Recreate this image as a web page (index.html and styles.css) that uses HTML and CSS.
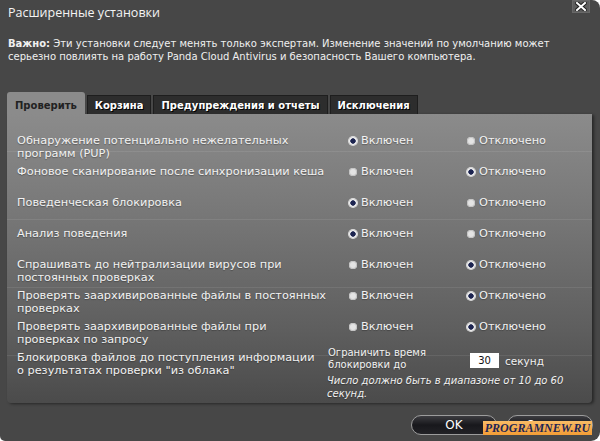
FILE: index.html
```html
<!DOCTYPE html>
<html lang="ru">
  <head>
    <meta charset="UTF-8" />
    <meta name="viewport" content="width=device-width, initial-scale=1.0" />
    <title>Расширенные установки</title>
    <link rel="stylesheet" href="styles.css">
  </head>
  <body>
    <div class="dialog">
      <div class="titlebar">
        <div class="title">Расширенные установки</div>
        <div class="close">
          <svg width="12" height="9" viewBox="0 0 12 9">
            <path d="M2 1 L10 8 M10 1 L2 8" stroke="#222" stroke-width="4" stroke-linecap="square" />
            <path d="M2 1 L10 8 M10 1 L2 8" stroke="#fff" stroke-width="2" stroke-linecap="square" />
          </svg>
        </div>
      </div>
      <p class="intro">
        <b>Важно:</b> Эти установки следует менять только экспертам. Изменение значений по умолчанию может<br>
        серьезно повлиять на работу Panda Cloud Antivirus и безопасность Вашего компьютера.
      </p>
      <div class="tabs">
        <div class="tab active">Проверить</div>
        <div class="tab">Корзина</div>
        <div class="tab">Предупреждения и отчеты</div>
        <div class="tab">Исключения</div>
      </div>
      <div class="panel">
        <div class="row">
          <div class="label">Обнаружение потенциально нежелательных<br>программ (PUP)</div>
          <div class="opt"><span class="radio on"></span>Включен</div>
          <div class="opt"><span class="radio"></span>Отключено</div>
        </div>
        <div class="row">
          <div class="label">Фоновое сканирование после синхронизации кеша</div>
          <div class="opt"><span class="radio"></span>Включен</div>
          <div class="opt"><span class="radio on"></span>Отключено</div>
        </div>
        <div class="row">
          <div class="label">Поведенческая блокировка</div>
          <div class="opt"><span class="radio on"></span>Включен</div>
          <div class="opt"><span class="radio"></span>Отключено</div>
        </div>
        <div class="row">
          <div class="label">Анализ поведения</div>
          <div class="opt"><span class="radio on"></span>Включен</div>
          <div class="opt"><span class="radio"></span>Отключено</div>
        </div>
        <div class="row">
          <div class="label">Спрашивать до нейтрализации вирусов при<br>постоянных проверках</div>
          <div class="opt"><span class="radio"></span>Включен</div>
          <div class="opt"><span class="radio on"></span>Отключено</div>
        </div>
        <div class="row">
          <div class="label">Проверять заархивированные файлы в постоянных<br>проверках</div>
          <div class="opt"><span class="radio"></span>Включен</div>
          <div class="opt"><span class="radio on"></span>Отключено</div>
        </div>
        <div class="row">
          <div class="label">Проверять заархивированные файлы при<br>проверках по запросу</div>
          <div class="opt"><span class="radio"></span>Включен</div>
          <div class="opt"><span class="radio on"></span>Отключено</div>
        </div>
        <div class="row last">
          <div class="label">Блокировка файлов до поступления информации<br>о результатах проверки "из облака"</div>
          <div class="limit">
            <div class="limit-line">
              <div class="limit-text">Ограничить время<br>блокировки до</div>
              <div class="num">30</div>
              <div class="unit">секунд</div>
            </div>
            <div class="note">Число должно быть в диапазоне от 10 до 60<br>секунд.</div>
          </div>
        </div>
      </div>
      <div class="footer">
        <div class="btn">OK</div>
        <div class="btn">Отмена</div>
      </div>
      <div class="watermark">PROGRAMNEW.RU</div>
    </div>
  </body>
</html>
```

FILE: styles.css
```css
body {
  margin: 0;
  background-color: #fff;
  font-family: "DejaVu Sans", sans-serif;
}
.dialog {
  position: relative;
  width: 600px;
  height: 441px;
  overflow: hidden;
  background-color: #474747;
  border-radius: 0 8px 9px 5px;
  color: #f2f2f2;
}
.titlebar {
  display: flex;
  justify-content: space-between;
  align-items: flex-start;
  height: 23px;
}
.title {
  padding: 4px 0 0 8px;
  font-family: "Open Sans", sans-serif;
  font-size: 12.5px;
  line-height: 18px;
  color: #f4f4f4;
}
.close {
  width: 18px;
  height: 13px;
  margin-right: 10px;
  background-color: #5d5d5d;
  box-shadow: inset 0 0 0 1px #686868;
  display: flex;
  justify-content: center;
  align-items: center;
}
.intro {
  margin: 14px 0 0 8px;
  font-size: 10px;
  line-height: 13px;
  color: #f0f0f0;
}
.tabs {
  display: flex;
  align-items: flex-end;
  gap: 2px;
  margin: 29px 0 0 7px;
  height: 22px;
}
.tab {
  height: 19px;
  box-sizing: border-box;
  padding: 0 7px;
  background-color: #2d2d2d;
  border: 1px solid #1e1e1e;
  border-bottom: none;
  display: flex;
  align-items: center;
  font-size: 10px;
  font-weight: bold;
  color: #fff;
  text-shadow: 1px 1px 0 #000;
}
.tab.active {
  height: 22px;
  padding: 4px 8px 0;
  background-color: #8b8b8b;
  border: none;
  border-radius: 3px 3px 0 0;
  color: #222;
  text-shadow: none;
}
.panel {
  margin: 0 8px 0 7px;
  height: 289px;
  box-sizing: border-box;
  padding: 20px 0 0 10px;
  border-radius: 0 0 4px 4px;
  background-color: #6b6b6b;
  background-image:
    repeating-linear-gradient(to bottom, transparent 0, transparent 37px, rgba(255, 255, 255, 0.08) 37px, rgba(255, 255, 255, 0.08) 38px, transparent 38px, transparent 68px),
    linear-gradient(#8b8b8b, #7a7a7a 30%, #5e5e5e 75%, #4b4b4b);
  box-shadow: 2px 1px 3px rgba(0, 0, 0, 0.45);
  font-size: 11.3px;
  line-height: 13px;
  text-shadow: 0 1px 1px rgba(0, 0, 0, 0.3);
}
.row {
  display: grid;
  grid-template-columns: 332px 118px 1fr;
  height: 31px;
}
.opt {
  display: flex;
  align-items: center;
  height: 13px;
}
.radio {
  width: 8px;
  height: 8px;
  margin-right: 4px;
  border-radius: 50%;
  background-color: #e4e4e4;
  box-shadow: inset 0 0 0 1px #c4c4c4;
}
.radio.on {
  background: radial-gradient(circle, #1c2450 0, #1c2450 2.4px, #f2f2f2 3px);
  box-shadow: 0 0 0 1px #dcdcdc;
}
.row.last {
  grid-template-columns: 311px 1fr;
  height: auto;
}
.limit-line {
  display: flex;
  align-items: center;
  margin-top: -4px;
  font-size: 10px;
  line-height: 12px;
}
.limit-text {
  width: 142px;
}
.num {
  width: 29px;
  height: 15px;
  margin-top: 2px;
  background-color: #fff;
  color: #111;
  text-shadow: none;
  font-size: 10px;
  line-height: 15px;
  text-align: center;
}
.unit {
  margin: 3px 0 0 6px;
  font-size: 10.5px;
}
.note {
  margin: 3px 0 0 -1px;
  font-size: 10px;
  font-style: italic;
  line-height: 13px;
}
.footer {
  display: flex;
  justify-content: flex-end;
  gap: 10px;
  margin: 12px 7px 0 0;
}
.btn {
  width: 86px;
  height: 20px;
  box-sizing: border-box;
  border: 1px solid #9c9c9c;
  border-radius: 10px;
  background-image: linear-gradient(#3c3c40, #18181c 50%, #222226);
  display: flex;
  justify-content: center;
  align-items: center;
  font-size: 12px;
  color: #fff;
}
.watermark {
  position: absolute;
  left: 483px;
  top: 421px;
  width: 109px;
  height: 14px;
  background-image: linear-gradient(#f8bb66, #f39d36);
  font-family: "Liberation Serif", serif;
  font-size: 12px;
  font-style: italic;
  font-weight: bold;
  line-height: 14px;
  color: #1e2555;
  text-align: center;
}
```
